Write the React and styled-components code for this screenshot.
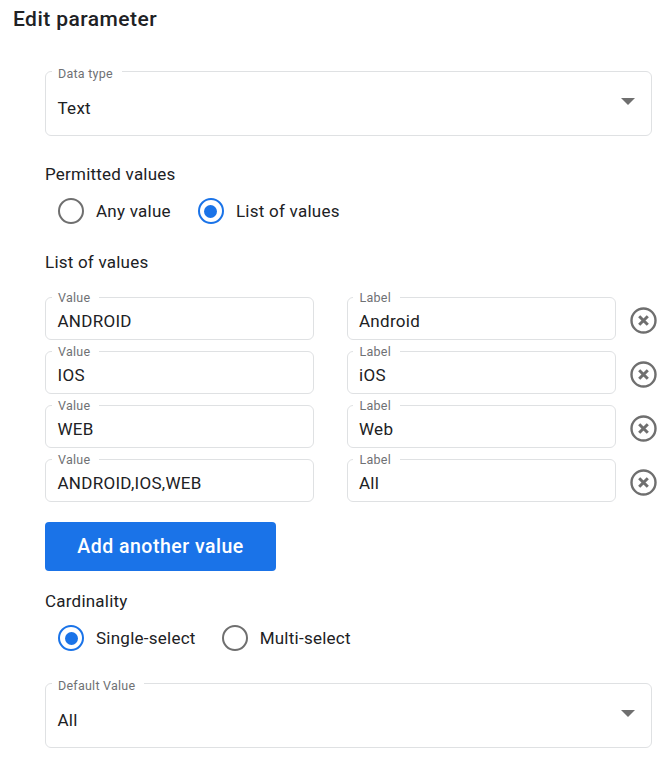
import React from "react";
import styled, { createGlobalStyle } from "styled-components";

const Global = createGlobalStyle`
  html, body { margin: 0; padding: 0; background: #fff; }
  body { font-family: Roboto, "Liberation Sans", sans-serif; color: #202124; -webkit-font-smoothing: antialiased; }
`;

const Page = styled.div`
  width: 670px;
  height: 758px;
  overflow: hidden;
  box-sizing: border-box;
  display: flex;
  flex-direction: column;
`;

const Title = styled.h1`
  margin: 7px 0 0 13px;
  font-size: 21px;
  line-height: 24px;
  font-weight: 500;
  letter-spacing: 0.45px;
  color: #202124;
`;

const Body = styled.div`
  margin: 30px 18px 0 45px;
  display: flex;
  flex-direction: column;
`;

const Outline = styled.fieldset`
  margin: 0;
  min-width: 0;
  box-sizing: border-box;
  border: 1.5px solid #dfe1e3;
  border-radius: 6px;
  padding: 0 11.5px;
  height: ${(p) => p.$h}px;
`;

const Legend = styled.legend`
  margin-left: -6px;
  padding: ${(p) => p.$drop}px 9px 0 6.5px;
  font-size: 12.5px;
  line-height: 14px;
  letter-spacing: 0.25px;
  color: #6f7174;
`;

const SelectLine = styled.div`
  display: flex;
  justify-content: space-between;
  align-items: flex-start;
  margin-top: 17px;
`;

const Value = styled.div`
  font-size: 17px;
  line-height: 20px;
  letter-spacing: 0.28px;
  color: #202124;
  margin-top: ${(p) => p.$top || 0}px;
`;

const Caret = styled.span`
  width: 0;
  height: 0;
  border-left: 7px solid transparent;
  border-right: 7px solid transparent;
  border-top: 7px solid #6f6f6f;
  margin: 0 5px 0 0;
`;

const SectionLabel = styled.div`
  font-size: 17px;
  line-height: 20px;
  letter-spacing: 0.22px;
  color: #202124;
  margin-top: ${(p) => p.$top}px;
`;

const RadioRow = styled.div`
  display: flex;
  align-items: center;
  margin: ${(p) => p.$top}px 0 0 13px;
  gap: ${(p) => p.$gap}px;
`;

const RadioItem = styled.label`
  display: flex;
  align-items: center;
  gap: 12px;
  font-size: 17px;
  line-height: 26px;
  letter-spacing: 0.25px;
  color: #202124;
`;

const RadioMark = styled.span`
  width: 26px;
  height: 26px;
  box-sizing: border-box;
  border-radius: 50%;
  border: 2.5px solid ${(p) => (p.$on ? "#1a73e8" : "#6f6f6f")};
  display: flex;
  align-items: center;
  justify-content: center;
  &::after {
    content: "";
    width: 13px;
    height: 13px;
    border-radius: 50%;
    background: ${(p) => (p.$on ? "#1a73e8" : "transparent")};
  }
`;

const Rows = styled.div`
  display: flex;
  flex-direction: column;
  gap: 3px;
  margin-top: 17px;
  width: 612px;
`;

const Row = styled.div`
  display: grid;
  align-items: end;
  grid-template-columns: 269px 269.5px 27px;
  column-gap: 32.5px;
  & > :last-child { margin-left: -18.5px; }
`;

const RemoveButton = styled.button`
  all: unset;
  width: 27px;
  height: 27px;
  display: block;
  margin-bottom: 6px;
  svg { display: block; }
`;

const AddButton = styled.button`
  all: unset;
  box-sizing: border-box;
  width: 231px;
  height: 49px;
  margin-top: 20px;
  border-radius: 4px;
  background: #1a73e8;
  color: #fff;
  font-size: 19.5px;
  font-weight: 500;
  letter-spacing: 0.5px;
  text-align: center;
  line-height: 49px;
`;

const SelectBlock = styled.div`
  margin-top: ${(p) => p.$top}px;
  display: flex;
  flex-direction: column;
`;

const RemoveIcon = () => (
  <svg width="27" height="27" viewBox="0 0 27 27" fill="none">
    <circle cx="13.5" cy="13.5" r="12" stroke="#6f6f6f" strokeWidth="2.4" />
    <path d="M9.2 9.2 17.8 17.8M17.8 9.2 9.2 17.8" stroke="#6f6f6f" strokeWidth="3" />
  </svg>
);

const Select = ({ label, value }) => (
  <Outline $h={75}>
    <Legend $drop={6}>{label}</Legend>
    <SelectLine>
      <Value>{value}</Value>
      <Caret />
    </SelectLine>
  </Outline>
);

const Field = ({ label, value }) => (
  <Outline $h={51}>
    <Legend $drop={2}>{label}</Legend>
    <Value $top={6}>{value}</Value>
  </Outline>
);

const Radio = ({ on, children }) => (
  <RadioItem>
    <RadioMark $on={on} />
    {children}
  </RadioItem>
);

const rows = [
  ["ANDROID", "Android"],
  ["IOS", "iOS"],
  ["WEB", "Web"],
  ["ANDROID,IOS,WEB", "All"],
];

export default function App() {
  return (
    <Page>
      <Global />
      <Title>Edit parameter</Title>
      <Body>
        <Select label="Data type" value="Text" />
        <SectionLabel $top={28}>Permitted values</SectionLabel>
        <RadioRow $top={14} $gap={27}>
          <Radio>Any value</Radio>
          <Radio on>List of values</Radio>
        </RadioRow>
        <SectionLabel $top={28}>List of values</SectionLabel>
        <Rows>
          {rows.map(([v, l]) => (
            <Row key={v}>
              <Field label="Value" value={v} />
              <Field label="Label" value={l} />
              <RemoveButton aria-label="Remove">
                <RemoveIcon />
              </RemoveButton>
            </Row>
          ))}
        </Rows>
        <AddButton>Add another value</AddButton>
        <SectionLabel $top={20}>Cardinality</SectionLabel>
        <RadioRow $top={14} $gap={26}>
          <Radio on>Single-select</Radio>
          <Radio>Multi-select</Radio>
        </RadioRow>
        <SelectBlock $top={22}>
          <Select label="Default Value" value="All" />
        </SelectBlock>
      </Body>
    </Page>
  );
}
